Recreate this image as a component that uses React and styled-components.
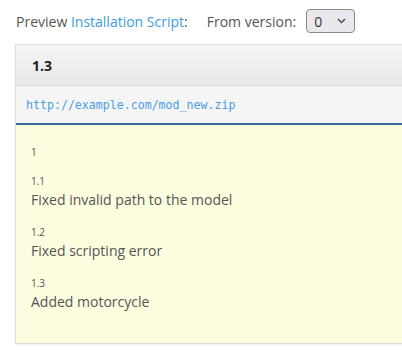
import React from "react";
import styled, { createGlobalStyle } from "styled-components";

const Global = createGlobalStyle`
  html, body { margin: 0; padding: 0; background: #fff; overflow: hidden; }
  body { font-family: "Open Sans", "Noto Sans", sans-serif; color: #555; }
`;

const Page = styled.div`
  width: 402px;
  height: 351px;
  overflow: hidden;
  padding-top: 9px;
  box-sizing: border-box;
`;

const Toolbar = styled.div`
  display: flex;
  align-items: center;
  height: 24px;
  padding-left: 16px;
  font-size: 14px;
  color: #555;
  white-space: nowrap;
`;

const Link = styled.a`
  color: #3d9be3;
  text-decoration: none;
`;

const Label = styled.span`
  margin-left: ${(p) => p.$gap || 0}px;
  margin-right: 10px;
`;

const SelectBox = styled.div`
  position: relative;
  width: 49px;
  height: 24px;
  box-sizing: border-box;
  border: 1px solid #8a8a8a;
  border-radius: 4px;
  background: #e9e9ed;
  display: flex;
  align-items: center;
  padding-left: 7px;
  font-size: 14px;
  color: #333;
`;

const Chevron = styled.svg`
  position: absolute;
  right: 8px;
  top: 8px;
`;

const Panel = styled.div`
  margin: 11px 0 0 15px;
  width: 420px;
  border: 1px solid #dcdcdc;
  box-shadow: 0 1px 2px rgba(0, 0, 0, 0.08);
`;

const Header = styled.div`
  height: 40px;
  display: flex;
  align-items: center;
  padding-left: 16px;
  font-weight: 700;
  font-size: 14px;
  color: #222;
  background: linear-gradient(#f5f5f5, #e8e8e8);
  border-bottom: 1px solid #dadada;
`;

const UrlRow = styled.div`
  height: 37px;
  display: flex;
  align-items: center;
  padding-left: 10px;
  background: #f5f5f5;
  border-bottom: 2px solid #3a6d9e;
  font-family: "DejaVu Sans Mono", monospace;
  font-size: 11.6px;
`;

const UrlLink = styled.a`
  color: #4a9de6;
  text-decoration: none;
`;

const Body = styled.div`
  background: #fdfddf;
  padding: 21px 15px 17px;
  height: 218px;
  box-sizing: border-box;
`;

const Item = styled.div`
  margin-bottom: 16px;
`;

const Version = styled.div`
  font-size: 10px;
  line-height: 13px;
  color: #555;
`;

const Desc = styled.div`
  font-size: 14px;
  line-height: 20px;
  color: #555;
  margin-top: 2px;
`;

const changes = [
  { v: "1", d: "" },
  { v: "1.1", d: "Fixed invalid path to the model" },
  { v: "1.2", d: "Fixed scripting error" },
  { v: "1.3", d: "Added motorcycle" },
];

export default function App() {
  return (
    <Page>
      <Global />
      <Toolbar>
        <span>
          Preview <Link href="#">Installation Script</Link>:
        </span>
        <Label $gap={19}>From version:</Label>
        <SelectBox>
          0
          <Chevron width="9" height="6" viewBox="0 0 9 6">
            <path d="M1 1l3.5 3.5L8 1" fill="none" stroke="#444" strokeWidth="1.3" />
          </Chevron>
        </SelectBox>
      </Toolbar>
      <Panel>
        <Header>1.3</Header>
        <UrlRow>
          <UrlLink href="#">http://example.com/mod_new.zip</UrlLink>
        </UrlRow>
        <Body>
          {changes.map((c) => (
            <Item key={c.v}>
              <Version>{c.v}</Version>
              {c.d && <Desc>{c.d}</Desc>}
            </Item>
          ))}
        </Body>
      </Panel>
    </Page>
  );
}
